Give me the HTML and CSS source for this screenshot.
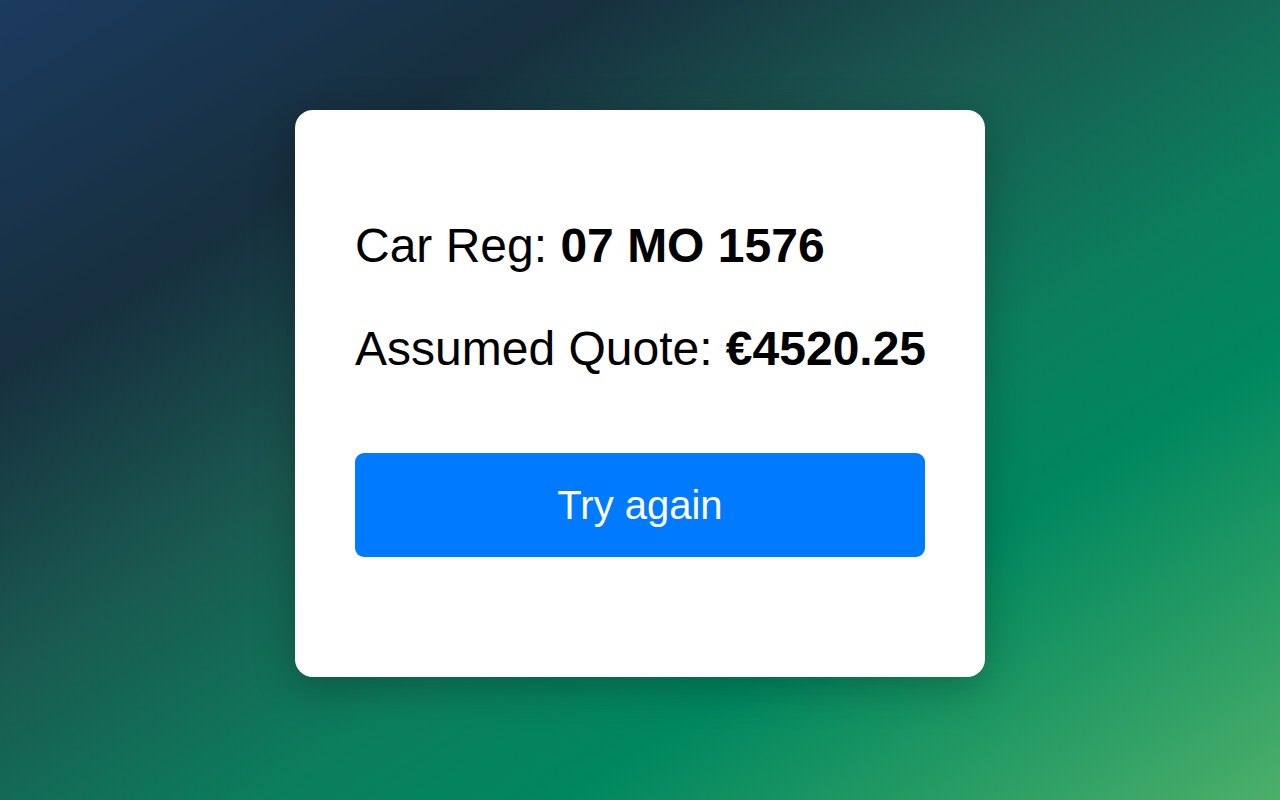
FILE: index.html
```html
<!DOCTYPE html>
<html lang="en">
<head>
<meta charset="utf-8">
<title>Quote</title>
<link rel="stylesheet" href="styles.css">
</head>
<body>
  <main class="card">
    <p class="line">Car Reg: <strong>07 MO 1576</strong></p>
    <p class="line">Assumed Quote: <strong>€4520.25</strong></p>
    <button class="btn" type="button">Try again</button>
  </main>
</body>
</html>
```

FILE: styles.css
```css
html, body {
  margin: 0;
  height: 100%;
}

body {
  font-family: "Liberation Sans", Arial, sans-serif;
  background: linear-gradient(to bottom right,
    #1b3b5f 0%,
    #172f3e 23%,
    #1a5a50 42%,
    #0c7d5d 60%,
    #00875f 72%,
    #4caf6a 100%);
  display: flex;
  align-items: center;
  justify-content: center;
  padding-bottom: 14px;
  box-sizing: border-box;
}

.card {
  width: 690px;
  box-sizing: border-box;
  background: #fff;
  border-radius: 18px;
  padding: 60px;
  box-shadow: 0 10px 40px rgba(0, 0, 0, 0.25);
  color: #000;
}

.line {
  font-size: 48px;
  margin: 48px 0;
  white-space: nowrap;
}

.btn {
  display: block;
  width: 100%;
  margin: 77px 0 60px;
  padding: 29px 0;
  border: none;
  border-radius: 9px;
  background: #007bff;
  color: #fff;
  font-family: "Liberation Sans", Arial, sans-serif;
  font-size: 40px;
  line-height: 46px;
  cursor: pointer;
}
```
